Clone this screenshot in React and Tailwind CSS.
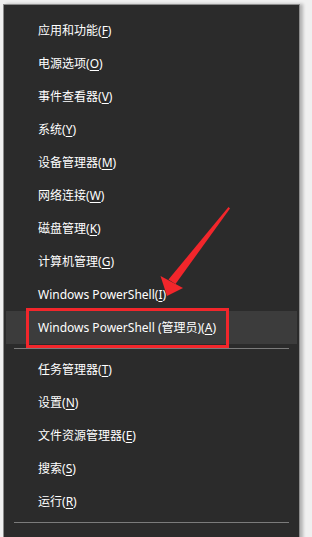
const menuGroups = [
  [
    { label: "应用和功能", key: "F" },
    { label: "电源选项", key: "O" },
    { label: "事件查看器", key: "V" },
    { label: "系统", key: "Y" },
    { label: "设备管理器", key: "M" },
    { label: "网络连接", key: "W" },
    { label: "磁盘管理", key: "K" },
    { label: "计算机管理", key: "G" },
    { label: "Windows PowerShell", key: "I" },
    { label: "Windows PowerShell (管理员)", key: "A", active: true },
  ],
  [
    { label: "任务管理器", key: "T" },
    { label: "设置", key: "N" },
    { label: "文件资源管理器", key: "E" },
    { label: "搜索", key: "S" },
    { label: "运行", key: "R" },
  ],
  [{ label: "关机或注销", key: "U", submenu: true }],
];

function MenuItem({ item }) {
  return (
    <div
      className={`mx-[2px] flex h-[33px] items-center justify-between pl-[32px] pr-[14px] text-[12px] text-white ${
        item.active ? "bg-[#3c3c3c]" : ""
      }`}
    >
      <span className="whitespace-nowrap">
        {item.label}(<span className="underline underline-offset-2">{item.key}</span>)
      </span>
      {item.submenu && (
        <svg width="8" height="10" viewBox="0 0 8 10" className="text-white">
          <path d="M2 1l4 4-4 4" fill="none" stroke="currentColor" strokeWidth="1.2" />
        </svg>
      )}
    </div>
  );
}

export default function App() {
  return (
    <div
      className="relative h-[537px] w-[312px] overflow-hidden bg-[#f0f0f0]"
      style={{ fontFamily: '"Noto Sans", "Noto Sans CJK SC", sans-serif' }}
    >
      <div className="ml-[3px] mt-[4px] w-[297px] border border-[#8c8c8c] bg-[#2b2b2b] pt-[9px] shadow-[3px_0_3px_rgba(0,0,0,0.25)]">
        {menuGroups.map((group, index) => (
          <div key={index}>
            {index > 0 && (
              <div className="flex h-[9px] items-center px-[10px]">
                <div className="h-px w-full bg-[#7b7b7b]" />
              </div>
            )}
            {group.map((item) => (
              <MenuItem key={item.label} item={item} />
            ))}
          </div>
        ))}
      </div>

      {/* annotation box */}
      <div className="pointer-events-none absolute left-[26px] top-[308px] h-[40px] w-[203px] border-[3px] border-[#f2262b]" />

      {/* annotation arrow */}
      <svg
        className="pointer-events-none absolute left-0 top-0"
        width="312"
        height="537"
        viewBox="0 0 312 537"
      >
        <polygon points="228.5,207 230,208.5 175.5,284 168.5,279.5" fill="#f2262b" />
        <polygon points="167,296 160.5,276 183,288" fill="#f2262b" />
      </svg>
    </div>
  );
}
